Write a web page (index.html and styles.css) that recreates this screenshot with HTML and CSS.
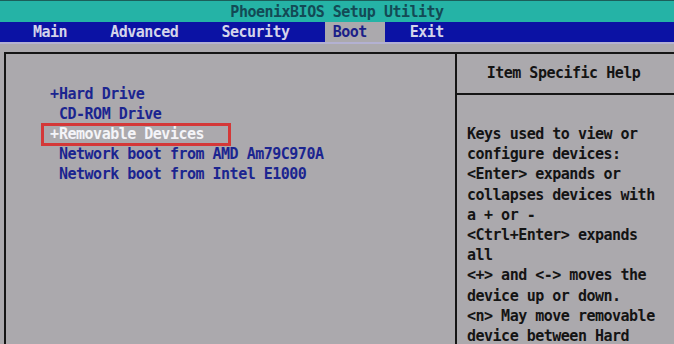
FILE: index.html
```html
<!DOCTYPE html>
<html lang="en">

<head>
  <meta charset="UTF-8">
  <meta name="viewport" content="width=device-width, initial-scale=1.0">
  <title>PhoenixBIOS Setup Utility</title>
  <link rel="stylesheet" href="styles.css">
</head>

<body>
  <div class="title">PhoenixBIOS Setup Utility</div>

  <div class="menu">
    <span class="menu-item">Main</span>
    <span class="menu-item">Advanced</span>
    <span class="menu-item">Security</span>
    <span class="menu-item active">Boot</span>
    <span class="menu-item">Exit</span>
  </div>

  <div class="frame">
    <div class="left-panel">
      <div class="boot-list">
        <div class="boot-row"><span class="sign">+</span>Hard Drive</div>
        <div class="boot-row"><span class="sign"></span>CD-ROM Drive</div>
        <div class="boot-row selected"><span class="sign">+</span>Removable Devices</div>
        <div class="boot-row"><span class="sign"></span>Network boot from AMD Am79C970A</div>
        <div class="boot-row"><span class="sign"></span>Network boot from Intel E1000</div>
      </div>
    </div>

    <div class="right-panel">
      <div class="help-title">Item Specific Help</div>
      <div class="help-text">
        <div>Keys used to view or</div>
        <div>configure devices:</div>
        <div>&lt;Enter&gt; expands or</div>
        <div>collapses devices with</div>
        <div>a + or -</div>
        <div>&lt;Ctrl+Enter&gt; expands</div>
        <div>all</div>
        <div>&lt;+&gt; and &lt;-&gt; moves the</div>
        <div>device up or down.</div>
        <div>&lt;n&gt; May move removable</div>
        <div>device between Hard</div>
      </div>
    </div>
  </div>
</body>

</html>
```

FILE: styles.css
```css
body {
  margin: 0;
  height: 344px;
  overflow: hidden;
  display: flex;
  flex-direction: column;
  background-color: #aba9ad;
  font-family: "DejaVu Sans Mono", "Liberation Mono", monospace;
  font-size: 15px;
  font-weight: bold;
  letter-spacing: -0.5px;
}

.title {
  height: 21px;
  line-height: 23px;
  background-color: #25b3a6;
  border-top: 1px solid #1c5e5a;
  color: #134a55;
  text-align: center;
}

.menu {
  display: flex;
  height: 20px;
  line-height: 20px;
  padding-left: 25px;
  background-color: #0b12a4;
  border-bottom: 2px solid #b3b1d2;
  color: #d4d4ea;
}

.menu-item {
  padding: 0 35px 0 8px;
}

.menu-item.active {
  background-color: #aba9ad;
  color: #1b2088;
  padding-right: 18px;
  margin-right: 17px;
}

.frame {
  flex: 1;
  display: flex;
  margin: 8px 0 0 4px;
  border-top: 2px solid #151515;
  border-left: 2px solid #151515;
}

.left-panel {
  width: 449px;
  border-right: 2px solid #151515;
}

.boot-list {
  padding: 30px 0 0 44px;
  color: #1b2590;
}

.boot-row {
  position: relative;
  height: 20px;
  line-height: 20px;
  white-space: nowrap;
}

.sign {
  display: inline-block;
  width: 9px;
}

.boot-row.selected {
  color: #f4f4f8;
}

/* red annotation box round the selected entry */
.boot-row.selected::after {
  content: "";
  position: absolute;
  left: -9px;
  top: -1px;
  width: 190px;
  height: 23px;
  border: 3px solid #d43838;
  box-sizing: border-box;
}

.right-panel {
  flex: 1;
}

.help-title {
  height: 39px;
  line-height: 39px;
  text-align: center;
  border-bottom: 2px solid #151515;
  color: #141414;
  padding-right: 4px;
}

.help-text {
  padding: 29px 0 0 10px;
  line-height: 20.2px;
  color: #141414;
  white-space: nowrap;
}
```
